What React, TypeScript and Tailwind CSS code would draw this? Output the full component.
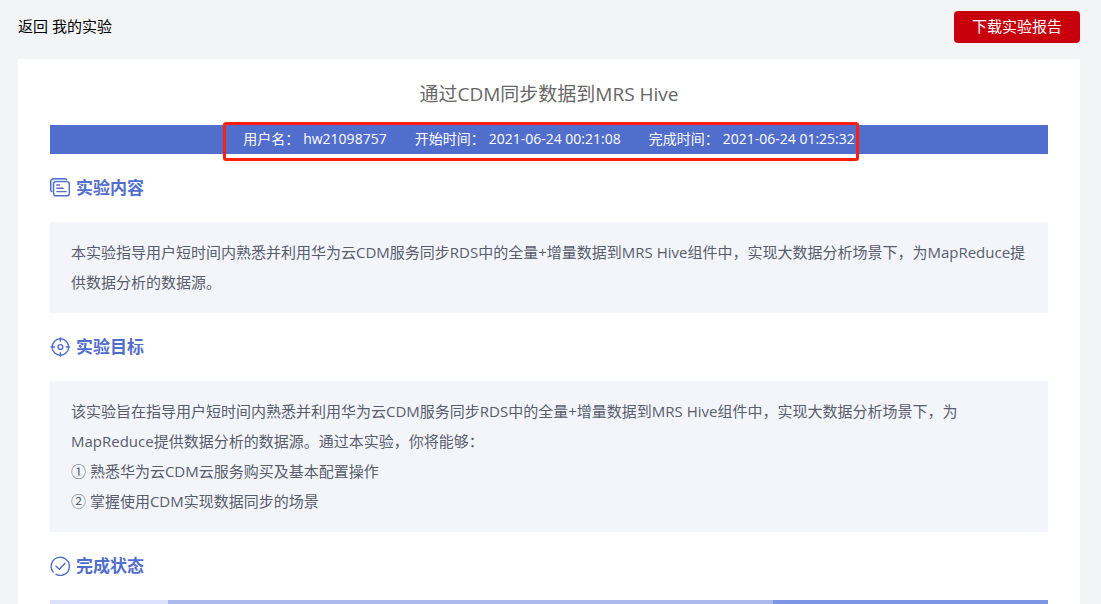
import React from "react";

const meta = [
  { label: "用户名：", value: "hw21098757" },
  { label: "开始时间：", value: "2021-06-24 00:21:08" },
  { label: "完成时间：", value: "2021-06-24 01:25:32" },
];

const goals = [
  "① 熟悉华为云CDM云服务购买及基本配置操作",
  "② 掌握使用CDM实现数据同步的场景",
];

const iconProps = {
  width: 20,
  height: 20,
  viewBox: "0 0 20 20",
  fill: "none",
  stroke: "currentColor",
  strokeWidth: 1.4,
  strokeLinecap: "round" as const,
  strokeLinejoin: "round" as const,
  "aria-hidden": true,
};

const ContentIcon = () => (
  <svg {...iconProps}>
    <path
      d="M3.4 14.4A2.6 2.6 0 0 1 .7 12V3.4A2.7 2.7 0 0 1 3.4.7h11.4a2.4 2.4 0 0 1 2.4 2.6H5.6a2.2 2.2 0 0 0-2.2 2.2z"
      fill="#dfe5fa"
      stroke="none"
    />
    <path d="M1.6 13.6a2 2 0 0 1-.9-1.8V3.4A2.7 2.7 0 0 1 3.4.7h11.2a2 2 0 0 1 1.8 1" />
    <rect x="3.6" y="3.6" width="15.7" height="14.2" rx="2.4" />
    <path d="M6.8 7h2.6M6.8 10.3h6.4M6.8 13.6h9.4" />
  </svg>
);

const TargetIcon = () => (
  <svg {...iconProps}>
    <circle cx="10.4" cy="10" r="8.3" />
    <circle cx="10.4" cy="10" r="2.4" />
    <path d="M10.4.7v3.6M10.4 15.7v3.6M1 10h3.6M16.2 10h3.2" />
  </svg>
);

const StatusIcon = () => (
  <svg {...iconProps}>
    <path d="M3.2 16.1A9.1 9.1 0 1 1 6 18.4" />
    <path d="M6 10.2l3.4 3 5.6-6" />
  </svg>
);

type SectionHeadingProps = {
  icon: React.ReactNode;
  title: string;
};

const SectionHeading = ({ icon, title }: SectionHeadingProps) => (
  <div className="flex h-17 items-center gap-1.5 text-[#526ecc]">
    {icon}
    <h2 className="text-[17px] font-bold leading-6">{title}</h2>
  </div>
);

const App = () => {
  return (
    <div className="flex min-h-screen flex-col bg-[#f3f4f6] pl-[18px] pr-[21px] font-['Open_Sans','Noto_Sans_CJK_SC',sans-serif] text-[15px]">
      {/* top bar */}
      <header className="flex items-center justify-between pt-[11px] pb-4">
        <a href="#experiments" className="pb-0.5 text-black">
          返回 我的实验
        </a>
        <button
          type="button"
          className="h-8 rounded bg-[#c7000b] px-[18px] pb-0.5 leading-5 text-white"
        >
          下载实验报告
        </button>
      </header>

      {/* report */}
      <main className="grow bg-white px-8">
        <h1 className="pt-[21px] pb-[17px] text-center text-[19px] leading-7 text-[#666]">
          通过CDM同步数据到MRS Hive
        </h1>
        <div className="flex justify-center bg-[#526ecc] pb-px text-sm leading-7 text-white">
          <dl className="relative flex gap-7">
            {meta.map((item) => (
              <div key={item.label} className="flex gap-1">
                <dt>{item.label}</dt>
                <dd>{item.value}</dd>
              </div>
            ))}
            <span className="pointer-events-none absolute -top-[3px] -right-1 -bottom-2 -left-5 rounded-[3px] border-3 border-[#ff1f10]" />
          </dl>
        </div>

        {/* content */}
        <section>
          <SectionHeading icon={<ContentIcon />} title="实验内容" />
          <div className="bg-[#f4f5fb] px-[21px] pt-[15px] pb-4 leading-[30px] text-[#575d6c]">
            <p>
              本实验指导用户短时间内熟悉并利用华为云CDM服务同步RDS中的全量+增量数据到MRS
              Hive组件中，实现大数据分析场景下，为MapReduce提供数据分析的数据源。
            </p>
          </div>
        </section>

        {/* goals */}
        <section>
          <SectionHeading icon={<TargetIcon />} title="实验目标" />
          <div className="bg-[#f4f5fb] px-[21px] pt-[15px] pb-4 leading-[30px] text-[#575d6c]">
            <p>
              该实验旨在指导用户短时间内熟悉并利用华为云CDM服务同步RDS中的全量+增量数据到MRS
              Hive组件中，实现大数据分析场景下，为MapReduce提供数据分析的数据源。通过本实验，你将能够：
            </p>
            <ul>
              {goals.map((goal) => (
                <li key={goal}>{goal}</li>
              ))}
            </ul>
          </div>
        </section>

        {/* status */}
        <section>
          <SectionHeading icon={<StatusIcon />} title="完成状态" />
          <div className="flex h-1">
            <div className="grow-118 bg-[#dce2fb]" />
            <div className="grow-605 bg-[#a9b9ec]" />
            <div className="grow-275 bg-[#7c95e4]" />
          </div>
        </section>
      </main>
    </div>
  );
};

export default App;
